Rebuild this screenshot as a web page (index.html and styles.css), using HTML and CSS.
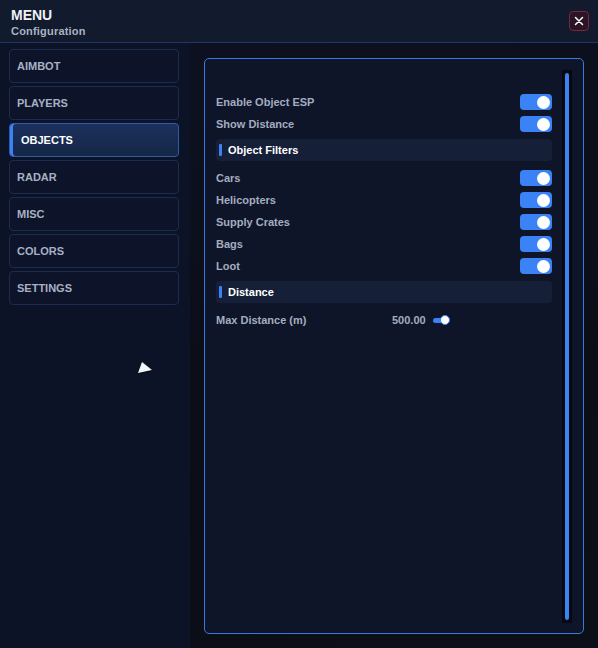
FILE: index.html
```html
<!DOCTYPE html>
<html lang="en">

<head>
  <meta charset="UTF-8" />
  <title>Menu</title>
  <link rel="stylesheet" href="styles.css">
</head>

<body>
  <div class="window">
    <header class="titlebar">
      <div class="titles">
        <div class="title">MENU</div>
        <div class="subtitle">Configuration</div>
      </div>
      <button class="close" title="Close">
        <svg width="12" height="12" viewBox="0 0 12 12">
          <path d="M2.5 2.5 L9.5 9.5 M9.5 2.5 L2.5 9.5" stroke="#fff" stroke-width="1.5" stroke-linecap="round" />
        </svg>
      </button>
    </header>

    <div class="main">
      <nav class="sidebar">
        <button class="tab">AIMBOT</button>
        <button class="tab">PLAYERS</button>
        <button class="tab active">OBJECTS</button>
        <button class="tab">RADAR</button>
        <button class="tab">MISC</button>
        <button class="tab">COLORS</button>
        <button class="tab">SETTINGS</button>

        <!-- mouse pointer -->
        <svg class="pointer" width="16" height="15" viewBox="0 0 16 15">
          <polygon points="5,1 1,12 15,9" fill="#000" opacity="0.35" transform="translate(1,1)" />
          <polygon points="5,1 1,12 15,9" fill="#f4f6fa" />
        </svg>
      </nav>

      <div class="stage">
        <section class="panel">
          <div class="options">
            <div class="row">
              <span>Enable Object ESP</span>
              <span class="toggle"><span class="knob"></span></span>
            </div>
            <div class="row">
              <span>Show Distance</span>
              <span class="toggle"><span class="knob"></span></span>
            </div>

            <div class="group"><span class="accent"></span>Object Filters</div>
            <div class="row">
              <span>Cars</span>
              <span class="toggle"><span class="knob"></span></span>
            </div>
            <div class="row">
              <span>Helicopters</span>
              <span class="toggle"><span class="knob"></span></span>
            </div>
            <div class="row">
              <span>Supply Crates</span>
              <span class="toggle"><span class="knob"></span></span>
            </div>
            <div class="row">
              <span>Bags</span>
              <span class="toggle"><span class="knob"></span></span>
            </div>
            <div class="row">
              <span>Loot</span>
              <span class="toggle"><span class="knob"></span></span>
            </div>

            <div class="group"><span class="accent"></span>Distance</div>
            <div class="row slider-row">
              <span class="slider-label">Max Distance (m)</span>
              <span class="slider-value">500.00</span>
              <span class="slider">
                <span class="slider-fill"></span>
                <span class="slider-knob"></span>
              </span>
            </div>
          </div>

          <div class="scrollbar">
            <div class="thumb"></div>
          </div>
        </section>
      </div>
    </div>
  </div>
</body>

</html>
```

FILE: styles.css
```css
* {
  box-sizing: border-box;
}

body {
  margin: 0;
  background-color: #0b0e18;
  font-family: "Liberation Sans", Arial, sans-serif;
  font-weight: bold;
  font-size: 11px;
}

.window {
  width: 598px;
  height: 648px;
  display: flex;
  flex-direction: column;
}

.titlebar {
  height: 43px;
  display: flex;
  justify-content: space-between;
  padding: 0 9px 0 11px;
  background-color: #121a2e;
  border-bottom: 1px solid #1d3866;
}

.titles {
  padding-top: 7px;
}

.title {
  color: #eef1f6;
  font-size: 14px;
  line-height: 16px;
}

.subtitle {
  color: #a9b2c3;
  font-size: 11px;
  line-height: 13px;
  margin-top: 2px;
  letter-spacing: 0.2px;
}

.close {
  margin-top: 11px;
  width: 20px;
  height: 20px;
  padding: 0;
  display: flex;
  align-items: center;
  justify-content: center;
  border: 1px solid #7e2536;
  border-radius: 4px;
  background-color: #291525;
  cursor: pointer;
}

.main {
  flex: 1;
  display: flex;
}

.sidebar {
  position: relative;
  width: 190px;
  padding: 6px 11px 0 9px;
  background-color: #0c1326;
  display: flex;
  flex-direction: column;
  gap: 3px;
}

.tab {
  height: 34px;
  padding: 0 0 0 7px;
  text-align: left;
  font-family: inherit;
  font-weight: bold;
  font-size: 11px;
  color: #a7b1c4;
  background-color: #0d1429;
  border: 1px solid #1b2c4f;
  border-radius: 4px;
  cursor: pointer;
}

.tab.active {
  padding-left: 11px;
  color: #ffffff;
  background: linear-gradient(180deg, #1b305c, #152747);
  border-color: #2f5ca6;
  box-shadow: inset 3px 0 0 #3b82f6;
}

.pointer {
  position: absolute;
  left: 137px;
  top: 318px;
}

.stage {
  flex: 1;
  display: flex;
  padding: 15px 14px 14px 14px;
  background: linear-gradient(160deg, #0d1020, #0b0e17 60%, #0d0f18);
}

.panel {
  flex: 1;
  display: flex;
  background-color: #0f1528;
  border: 1px solid #3a79df;
  border-radius: 5px;
}

.options {
  flex: 1;
  padding: 32px 0 0 11px;
}

.row {
  height: 22px;
  display: flex;
  align-items: center;
  justify-content: space-between;
  color: #a3adc0;
}

.toggle {
  width: 32px;
  height: 16px;
  display: flex;
  align-items: center;
  justify-content: flex-end;
  padding-right: 2px;
  background-color: #3b82f6;
  border-radius: 4px;
}

.knob {
  width: 13px;
  height: 13px;
  border-radius: 50%;
  background-color: #ffffff;
}

.group {
  height: 22px;
  margin: 4px 0 6px;
  display: flex;
  align-items: center;
  padding-left: 3px;
  color: #ffffff;
  background-color: #151f38;
  border-radius: 4px;
}

.accent {
  width: 3px;
  height: 12px;
  margin-right: 6px;
  border-radius: 1px;
  background-color: #3b82f6;
}

.slider-row {
  justify-content: flex-start;
}

.slider-label {
  width: 176px;
}

.slider {
  margin-left: 7px;
  display: flex;
  align-items: center;
}

.slider-fill {
  width: 12px;
  height: 5px;
  border-radius: 3px 0 0 3px;
  background-color: #3b82f6;
}

.slider-knob {
  width: 10px;
  height: 10px;
  margin-left: -5px;
  border-radius: 50%;
  background-color: #ffffff;
  border: 1.5px solid #3b82f6;
}

.scrollbar {
  width: 10px;
  margin: 11px 11px 10px 10px;
  padding: 3px;
  background-color: #060910;
}

.thumb {
  height: 100%;
  border-radius: 2px;
  background-color: #3b82f6;
}
```
